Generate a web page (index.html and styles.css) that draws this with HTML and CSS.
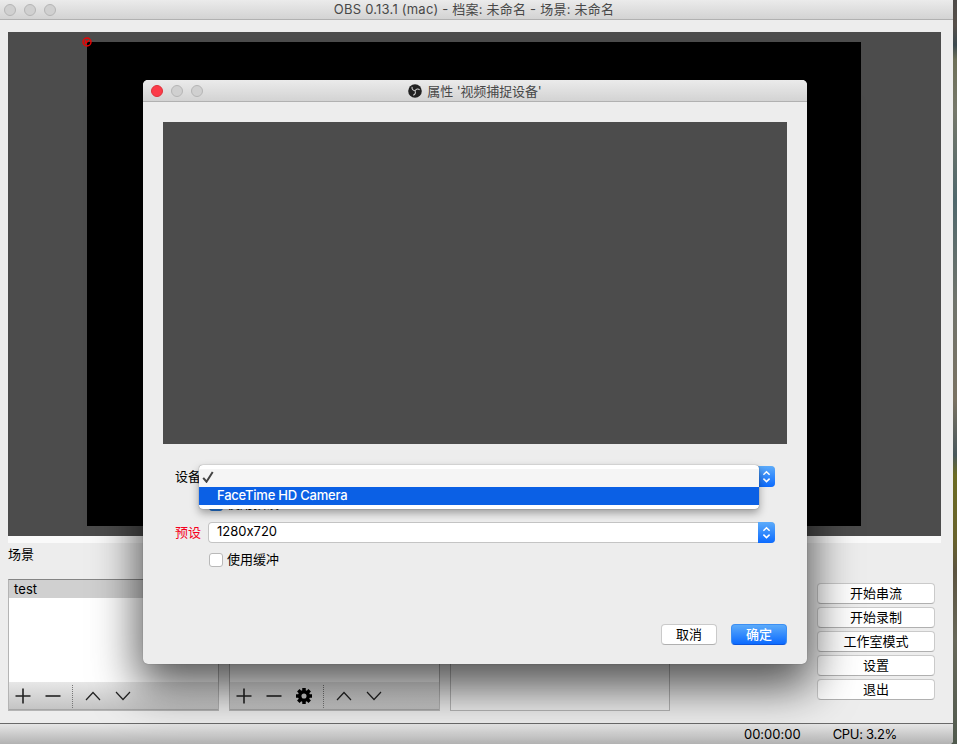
FILE: index.html
```html
<!DOCTYPE html>
<html lang="zh-CN">
<head>
  <meta charset="UTF-8">
  <meta name="viewport" content="width=device-width, initial-scale=1.0">
  <title>OBS 0.13.1 (mac)</title>
  <link rel="stylesheet" href="styles.css">
</head>
<body>
  <svg class="sprites">
    <symbol id="plus" viewBox="0 0 16 16"><path d="M0.5 8H15.5M8 0.5V15.5"/></symbol>
    <symbol id="minus" viewBox="0 0 16 16"><path d="M0.5 8H15.5"/></symbol>
    <symbol id="up" viewBox="0 0 16 16"><path d="M1 12L8 4.5L15 12"/></symbol>
    <symbol id="down" viewBox="0 0 16 16"><path d="M1 4L8 11.500L15 4"/></symbol>
    <symbol id="arrows" viewBox="0 0 17 21"><path d="M5.400 8.700L8.500 5.700L11.600 8.700M5.400 12.600L8.500 15.600L11.600 12.600"/></symbol>
  </svg>

  <div class="window">
    <div class="titlebar">
      <div class="lights"><i></i><i></i><i></i></div>
      <span class="main-title">OBS 0.13.1 (mac) - 档案: 未命名 - 场景: 未命名</span>
    </div>

    <div class="preview">
      <div class="canvas">
        <svg class="handle" viewBox="0 0 10 10"><circle cx="5" cy="5" r="4"/><path d="M3 7L7 3M3.500 3V6"/></svg>
      </div>
    </div>

    <div class="bottom">
      <div class="panel">
        <div class="panel-label">场景</div>
        <div class="list">
          <div class="item">test</div>
          <div class="toolbar">
            <svg><use href="#plus"/></svg>
            <svg><use href="#minus"/></svg>
            <span class="sep"></span>
            <svg class="thin"><use href="#up"/></svg>
            <svg class="thin"><use href="#down"/></svg>
          </div>
        </div>
      </div>
      <div class="panel">
        <div class="panel-label"></div>
        <div class="list">
          <div class="toolbar">
            <svg><use href="#plus"/></svg>
            <svg><use href="#minus"/></svg>
            <svg class="gear" viewBox="0 0 16 16">
              <circle cx="8" cy="8" r="4.300"/>
              <path d="M8 0V3M8 13V16M0 8H3M13 8H16M2.300 2.300L4.500 4.500M11.500 11.500L13.700 13.700M2.300 13.700L4.500 11.500M11.500 4.500L13.700 2.300"/>
            </svg>
            <span class="sep"></span>
            <svg class="thin"><use href="#up"/></svg>
            <svg class="thin"><use href="#down"/></svg>
          </div>
        </div>
      </div>
      <div class="panel mixer">
        <div class="panel-label"></div>
        <div class="frame"></div>
      </div>
      <div class="controls">
        <button>开始串流</button>
        <button>开始录制</button>
        <button>工作室模式</button>
        <button>设置</button>
        <button>退出</button>
      </div>
    </div>

    <div class="statusbar">
      <span class="time">00:00:00</span>
      <span class="cpu">CPU: 3.2%</span>
    </div>
  </div>

  <div class="dialog">
    <div class="titlebar">
      <div class="lights"><i class="close"></i><i></i><i></i></div>
      <svg class="logo" viewBox="0 0 14 14">
        <circle cx="7" cy="7" r="6.800"/>
        <path d="M4.100 2.800C3.600 5 5 6.500 7 6.700C8.200 5 10 4.300 11.600 5.800M7 6.700C8 8.700 7.200 10.600 5.200 11.200"/>
      </svg>
      <span class="dialog-title">属性 '视频捕捉设备'</span>
    </div>
    <div class="dialog-preview"></div>
    <div class="form">
      <label>设备</label>
      <div class="field">
        <div class="combo"><span></span><svg><use href="#arrows"/></svg></div>
        <div class="menu">
          <div class="option">
            <svg class="check" viewBox="0 0 12 12"><path d="M1.200 6.800L4.500 10.700L10.700 1"/></svg>
          </div>
          <div class="option selected">FaceTime HD Camera</div>
        </div>
      </div>
      <label></label>
      <div class="field"><span class="box checked"></span><span class="text">使用预设</span></div>
      <label class="required">预设</label>
      <div class="field">
        <div class="combo"><span>1280x720</span><svg><use href="#arrows"/></svg></div>
      </div>
      <label></label>
      <div class="field"><span class="box"></span><span class="text">使用缓冲</span></div>
    </div>
    <div class="actions">
      <button>取消</button>
      <button class="primary">确定</button>
    </div>
  </div>
</body>
</html>
```

FILE: styles.css
```css
* {
  box-sizing: border-box;
}

body {
  margin: 0;
  position: relative;
  width: 957px;
  height: 744px;
  overflow: hidden;
  font-family: Inter, "Noto Sans CJK SC", sans-serif;
  font-size: 13px;
  font-feature-settings: "calt" 0;
  line-height: 20px;
  color: #000;
  background: linear-gradient(#4d4a48 0, #57504a 25px, #3c4a50 45px, #6e7058 60px, #76786a 110px, #4f686c 200px, #70746c 300px, #7a7262 400px, #49585c 455px, #6c6c22 475px, #68622c 540px, #5c5440 570px, #68685a 640px, #505a4e 744px);
}

.sprites {
  display: none;
}

svg {
  display: block;
  flex: none;
  fill: none;
  stroke: #222;
}

.window {
  width: 953px;
  height: 744px;
  display: flex;
  flex-direction: column;
  background: #ededed;
  border-bottom-right-radius: 4px;
  overflow: hidden;
}

.titlebar {
  position: relative;
  flex: none;
  display: flex;
  align-items: center;
  justify-content: center;
  height: 20px;
  color: #484848;
  background: linear-gradient(#ebebeb, #d3d3d3);
  border-bottom: 1px solid #b1b1b1;
}

.lights {
  position: absolute;
  left: 4px;
  display: flex;
  gap: 8px;
}

.lights i {
  width: 12px;
  height: 12px;
  border-radius: 50%;
  background: #d0d0d0;
  border: 1px solid #b5b5b5;
}

.lights .close {
  background: #fc3b49;
  border-color: #df3039;
}

.main-title {
  margin: -2px 5px 0 0;
  letter-spacing: 0.22px;
}

.dialog-title {
  letter-spacing: -0.1px;
}

.preview {
  flex: none;
  margin: 12px 12px 0 8px;
  height: 511px;
  padding: 10px 80px 17px 79px;
  background: linear-gradient(#4c4c4c 504px, #fafafa 504px);
}

.canvas {
  position: relative;
  height: 484px;
  background: #000;
}

.handle {
  position: absolute;
  left: -5px;
  top: -5px;
  width: 10px;
  height: 10px;
  stroke: #f00000;
  stroke-width: 1.4;
}

.bottom {
  flex: 1;
  display: flex;
  gap: 10px;
  padding: 0 18px 12px 8px;
}

.panel {
  width: 211px;
  display: flex;
  flex-direction: column;
}

.panel-label {
  height: 36px;
  padding-top: 1px;
}

.list {
  flex: 1;
  display: flex;
  flex-direction: column;
  background: #fff;
  border: 1px solid #b4b4b4;
  border-top-color: #858585;
}

.item {
  height: 18px;
  line-height: 19px;
  padding-left: 5px;
  letter-spacing: 0.1px;
  background: #d0d0d0;
}

.toolbar {
  margin-top: auto;
  height: 28px;
  display: flex;
  align-items: center;
  gap: 14px;
  padding: 1px 6px 0;
  background: linear-gradient(#e7e7e7, #c4c4c4);
  border-bottom: 1px solid #a6a6a6;
}

.toolbar svg {
  width: 16px;
  height: 16px;
  stroke-width: 1.6;
}

.toolbar .thin {
  stroke-width: 1.2;
}

.toolbar .gear {
  stroke: #000;
  stroke-width: 3.500;
}

.sep {
  height: 23px;
  margin: 0 -2px 0 -3px;
  border-left: 1px dotted #777;
}

.mixer {
  width: 220px;
}

.frame {
  flex: 1;
  border: 1px solid #b4b4b4;
}

.controls {
  width: 118px;
  margin-left: auto;
  padding-top: 40px;
  display: flex;
  flex-direction: column;
  gap: 3px;
}

button {
  height: 21px;
  padding: 0 0 1px;
  font: inherit;
  line-height: 18px;
  color: #000;
  background: #fff;
  border: 1px solid #cacaca;
  border-bottom-color: #b0b0b0;
  border-radius: 4px;
}

.statusbar {
  flex: none;
  height: 21px;
  display: flex;
  justify-content: flex-end;
  gap: 32px;
  padding-right: 56px;
  background: linear-gradient(#e6e6e6, #b2b2b2);
  border-top: 1px solid #696969;
}

.cpu {
  letter-spacing: -0.3px;
}

.dialog {
  position: absolute;
  left: 143px;
  top: 80px;
  width: 664px;
  height: 584px;
  display: flex;
  flex-direction: column;
  background: #ededed;
  border-radius: 5px;
  box-shadow: 0 0 1px rgba(0, 0, 0, 0.5), 0 18px 46px 5px rgba(0, 0, 0, 0.66);
}

.dialog .titlebar {
  height: 22px;
  gap: 5px;
  border-radius: 5px 5px 0 0;
}

.dialog .lights {
  left: 8px;
}

.logo {
  width: 14px;
  height: 14px;
  fill: #222;
  stroke: none;
}

.logo path {
  fill: none;
  stroke: #ccc;
  stroke-width: 1.1;
}

.dialog-preview {
  flex: none;
  height: 322px;
  margin: 20px 20px 0;
  background: #4c4c4c;
}

.form {
  display: grid;
  grid-template-columns: 38px 567px;
  grid-auto-rows: 21px;
  gap: 7px;
  padding: 22px 20px 0;
}

label {
  line-height: 20px;
  text-align: right;
  white-space: nowrap;
}

.required {
  color: #f5001d;
}

.field {
  position: relative;
  display: flex;
  align-items: center;
}

.text {
  margin-top: -3px;
}

.combo {
  flex: 1;
  height: 21px;
  display: flex;
  justify-content: space-between;
  padding-left: 9px;
  line-height: 19px;
  background: #fff;
  border-radius: 4px;
  box-shadow: inset 0 0 0 1px #c4c4c4;
}

.combo svg {
  width: 17px;
  height: 21px;
  stroke: #fff;
  stroke-width: 1.5;
  background: linear-gradient(#5cabfa, #0c6bff);
  border-radius: 0 4px 4px 0;
}

.box {
  width: 14px;
  height: 14px;
  margin: -1px 4px 0 1px;
  background: #fff;
  border: 1px solid #b9b9b9;
  border-radius: 3px;
}

.box.checked {
  background: #2580e8;
  border-color: #2272cf;
}

.menu {
  position: absolute;
  z-index: 1;
  left: -9px;
  top: -1px;
  width: 560px;
  height: 44px;
  padding: 4px 0;
  background: #fff;
  border-radius: 4px;
  box-shadow: 0 0 1px rgba(0, 0, 0, 0.6), 0 4px 9px rgba(0, 0, 0, 0.35);
}

.option {
  height: 18px;
  padding: 2px 0 0 3px;
  background: #f5f5f5;
}

.option.selected {
  padding: 0 18px;
  line-height: 17px;
  letter-spacing: -0.22px;
  color: #fff;
  font-weight: 500;
  background: #0b60e5;
}

.check {
  width: 12px;
  height: 12px;
  stroke: #444;
  stroke-width: 2;
}

.actions {
  margin-top: auto;
  display: flex;
  justify-content: flex-end;
  gap: 14px;
  padding: 0 20px 19px;
}

.actions button {
  width: 56px;
}

.actions .primary {
  color: #fff;
  font-weight: 500;
  background: linear-gradient(#5cabfa, #0c6bff);
  border-color: #3c8ff3;
  border-bottom-color: #0b55dc;
}
```
